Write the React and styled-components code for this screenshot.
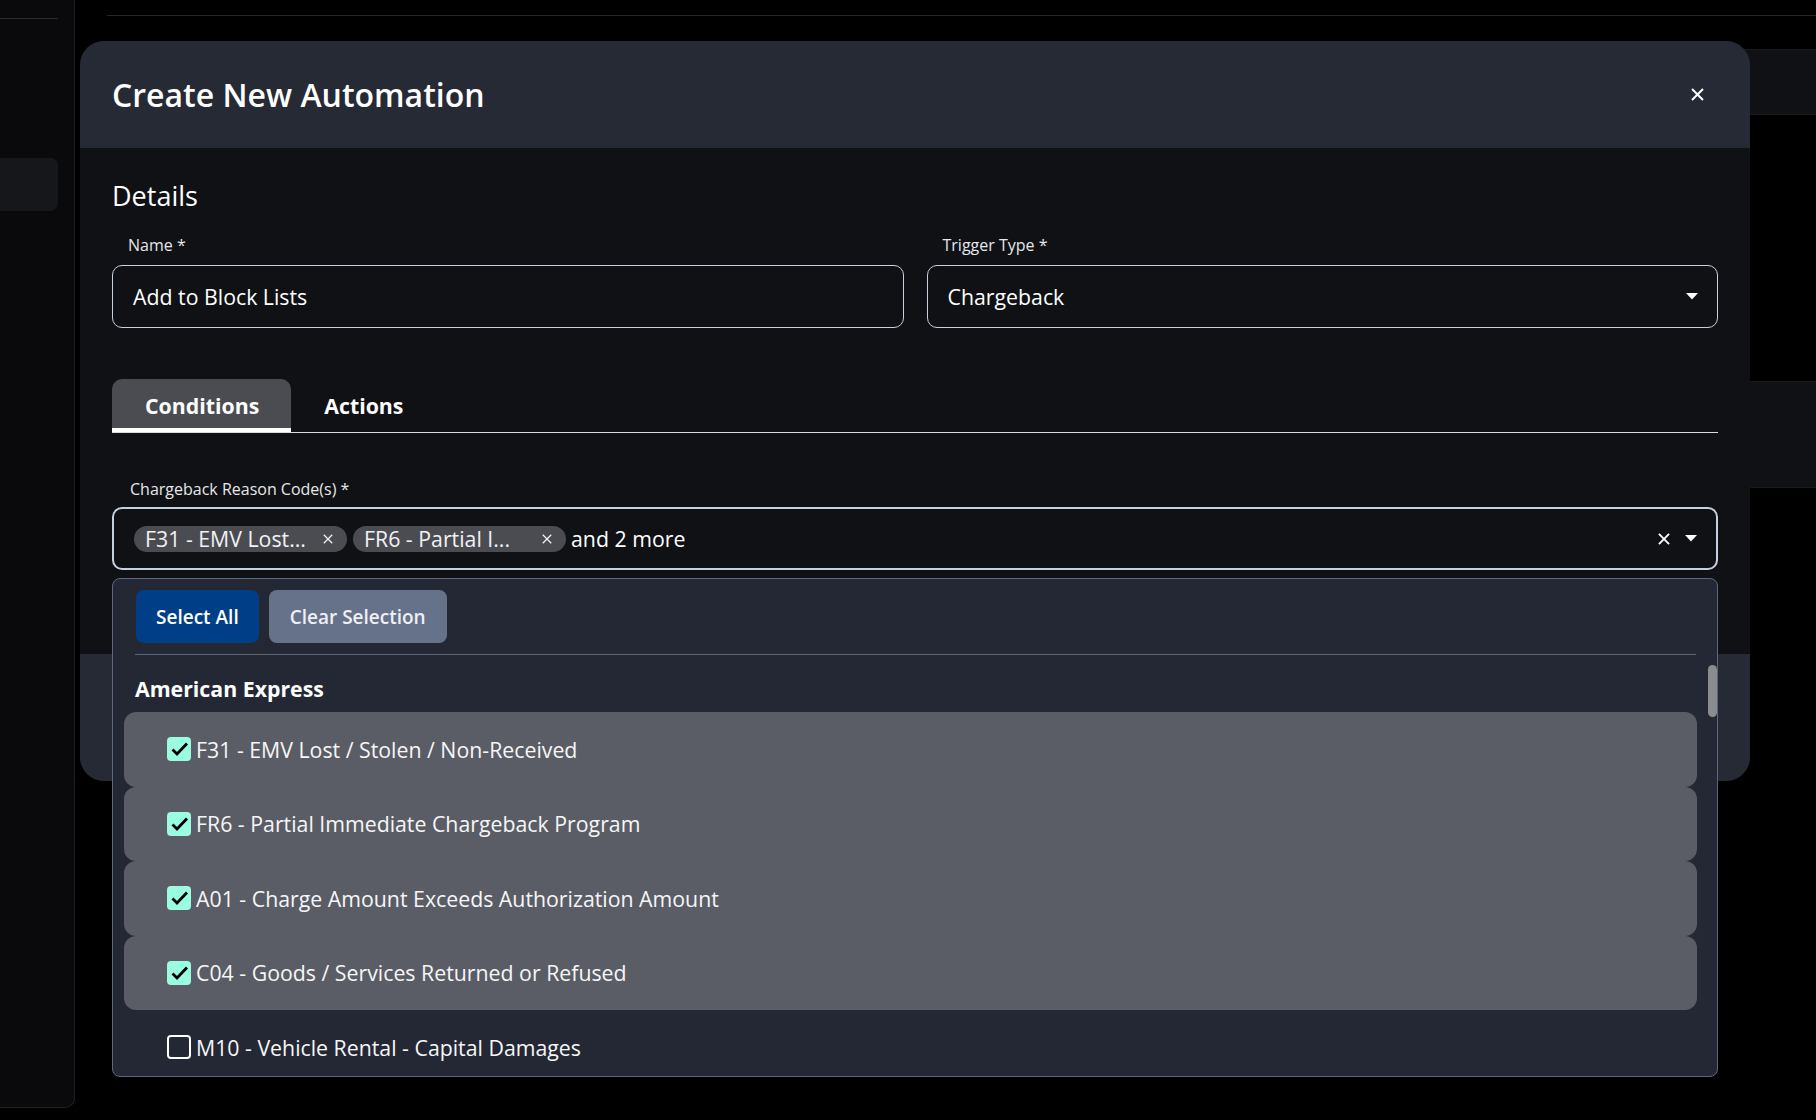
import React from "react"
import styled, { createGlobalStyle } from "styled-components"

const colors = {
  page: "#000000",
  panel: "#0f1115",
  header: "#252a35",
  dropdown: "#242834",
  row: "#5a5d66",
  chip: "#4a4c52",
  border: "#c6d0e1",
  text: "#f4f5f7",
  check: "#9afce0",
}

const GlobalStyle = createGlobalStyle`
  body {
    margin: 0;
    background: ${colors.page};
    font-family: "Open Sans", "Noto Sans", sans-serif;
    color: ${colors.text};
  }
`

const Page = styled.div`
  position: relative;
  display: flex;
  width: 1816px;
  height: 1120px;
  overflow: hidden;
`

const Sidebar = styled.aside`
  width: 74px;
  height: 1107px;
  flex-shrink: 0;
  background: #0a0a0c;
  border-right: 1px solid #1f2024;
  border-bottom: 1px solid #1f2024;
  border-bottom-right-radius: 10px;
  .rule {
    margin-top: 18px;
    width: 58px;
    height: 1px;
    background: #2a2b2f;
  }
  .item {
    margin-top: 139px;
    width: 58px;
    height: 53px;
    background: #16171b;
    border-radius: 0 8px 8px 0;
  }
`

const Main = styled.main`
  flex: 1;
  padding-left: 32px;
  .top-rule {
    margin-top: 15px;
    height: 1px;
    background: #26272b;
  }
`

const BackCard = styled.div`
  margin-top: ${props => props.offset}px;
  height: ${props => props.size}px;
  background: ${colors.panel};
  border-top: 1px solid #17191e;
  border-bottom: 1px solid #17191e;
`

const Overlay = styled.div`
  position: absolute;
  inset: 0;
  padding: 41px 0 0 80px;
`

const Modal = styled.section`
  width: 1670px;
  background: ${colors.panel};
  border-radius: 24px;
`

const ModalHeader = styled.header`
  height: 107px;
  display: flex;
  align-items: center;
  justify-content: space-between;
  padding: 0 46px 0 32px;
  background: ${colors.header};
  border-radius: 24px 24px 0 0;
  h2 {
    margin: 0;
    font-size: 32px;
    font-weight: 600;
    color: #ffffff;
  }
`

const IconButton = styled.button`
  display: flex;
  padding: 0;
  border: 0;
  background: none;
  color: #ffffff;
`

const ModalBody = styled.div`
  padding: 30px 32px 84px;
`

const SectionTitle = styled.h3`
  margin: 0;
  font-size: 27px;
  line-height: 36px;
  font-weight: 500;
  color: #ffffff;
`

const FieldGrid = styled.div`
  display: grid;
  grid-template-columns: 1fr 1fr;
  gap: 23px;
  margin-top: 21px;
`

const Field = styled.div`
  position: relative;
  display: flex;
  flex-direction: column;
`

const Label = styled.label`
  padding-left: ${props => props.indent || 16}px;
  margin-bottom: ${props => props.gap || 10}px;
  font-size: 16px;
  line-height: 20px;
  color: #e6e7ea;
`

const InputBox = styled.div`
  height: 63px;
  box-sizing: border-box;
  display: flex;
  align-items: center;
  gap: 6px;
  padding: 0 19px 0 20px;
  border: ${props => (props.focused ? 2 : 1)}px solid ${colors.border};
  border-radius: 10px;
  font-size: 21.3px;
  color: #ffffff;
  .value {
    flex: 1;
  }
  .more {
    flex: 1;
    margin-left: -1px;
  }
`

const Adornments = styled.div`
  display: flex;
  align-items: center;
  gap: 15px;
`

const Chip = styled.span`
  display: flex;
  align-items: center;
  gap: 13px;
  height: 26px;
  padding: 0 14px 0 11px;
  border-radius: 13px;
  background: ${colors.chip};
  font-size: 21.3px;
  color: #f1f2f4;
  .chip-label {
    width: 165px;
    white-space: nowrap;
  }
`

const TabBar = styled.div`
  display: flex;
  margin-top: 51px;
  border-bottom: 1px solid #d8dbe0;
`

const Tab = styled.div`
  height: 53px;
  box-sizing: border-box;
  display: flex;
  align-items: center;
  padding: 4px 32px 0 33px;
  font-size: 21.3px;
  font-weight: 700;
  color: #ffffff;
  background: ${props => (props.active ? "#4b4c51" : "transparent")};
  border-radius: 10px 10px 0 0;
  border-bottom: 4px solid ${props => (props.active ? "#ffffff" : "transparent")};
`

const ConditionsField = styled(Field)`
  margin-top: 46px;
`

const Dropdown = styled.div`
  position: absolute;
  top: calc(100% + 8px);
  left: 0;
  right: 0;
  height: 499px;
  box-sizing: border-box;
  z-index: 2;
  overflow: hidden;
  background: ${colors.dropdown};
  border: 1px solid #5d6880;
  border-radius: 8px;
`

const ButtonBar = styled.div`
  display: flex;
  gap: 10px;
  padding: 11px 0 0 23px;
`

const Button = styled.button`
  height: 53px;
  padding: 0 ${props => props.pad}px;
  border: 0;
  border-radius: 8px;
  font-family: inherit;
  font-size: 19px;
  font-weight: 600;
  color: ${props => (props.primary ? "#ffffff" : "#eef0f5")};
  background: ${props => (props.primary ? "#003e87" : "#66718a")};
`

const Divider = styled.div`
  height: 1px;
  margin: 11px 21px 0 22px;
  background: #5b6478;
`

const GroupTitle = styled.div`
  margin: 19px 0 8px 22px;
  font-size: 21.3px;
  line-height: 30px;
  font-weight: 700;
  color: #ffffff;
`

const Option = styled.div`
  height: 74.5px;
  display: flex;
  align-items: center;
  gap: 5px;
  margin: 0 20px 0 11px;
  padding-left: 43px;
  border-radius: 12px;
  background: ${props => (props.selected ? colors.row : "transparent")};
  font-size: 21.3px;
  color: #f6f6f7;
`

const Checkbox = styled.span`
  width: 24px;
  height: 24px;
  box-sizing: border-box;
  display: flex;
  align-items: center;
  justify-content: center;
  border-radius: 4px;
  background: ${props => (props.checked ? colors.check : "transparent")};
  border: ${props => (props.checked ? "none" : "2px solid #ffffff")};
`

const ScrollThumb = styled.div`
  position: absolute;
  top: 86px;
  right: 0;
  width: 9px;
  height: 52px;
  border-radius: 5px;
  background: #8b8c90;
`

const ModalFooter = styled.footer`
  height: 127px;
  background: ${colors.header};
  border-radius: 0 0 24px 24px;
`

const CloseIcon = ({ size = 13, width = 2 }) => (
  <svg width={size} height={size} viewBox="0 0 13 13">
    <path d="M1 1 L12 12 M12 1 L1 12" stroke="currentColor" strokeWidth={width} />
  </svg>
)

const ArrowIcon = () => (
  <svg width="12" height="7" viewBox="0 0 12 7">
    <path d="M0 0 H12 L6 6.5 Z" fill="#ffffff" />
  </svg>
)

const CheckIcon = () => (
  <svg width="19" height="16" viewBox="0 0 19 16">
    <path d="M2.5 8.5 L7 13 L17 2.5" stroke="#000" strokeWidth="2.8" fill="none" />
  </svg>
)

// short = the label as the chip shows it, cut to the chip width
const options = [
  { label: "F31 - EMV Lost / Stolen / Non-Received", short: "F31 - EMV Lost...", selected: true },
  { label: "FR6 - Partial Immediate Chargeback Program", short: "FR6 - Partial I...", selected: true },
  { label: "A01 - Charge Amount Exceeds Authorization Amount", selected: true },
  { label: "C04 - Goods / Services Returned or Refused", selected: true },
  { label: "M10 - Vehicle Rental - Capital Damages", selected: false },
]

const App = () => {
  const chips = options.filter(o => o.selected)

  return (
    <Page>
      <GlobalStyle />
      <Sidebar>
        <div className="rule" />
        <div className="item" />
      </Sidebar>
      <Main>
        <div className="top-rule" />
        <BackCard offset={33} size={64} />
        <BackCard offset={266} size={105} />
      </Main>

      <Overlay>
        <Modal>
          <ModalHeader>
            <h2>Create New Automation</h2>
            <IconButton aria-label="Close">
              <CloseIcon />
            </IconButton>
          </ModalHeader>

          <ModalBody>
            <SectionTitle>Details</SectionTitle>
            <FieldGrid>
              <Field>
                <Label>Name *</Label>
                <InputBox>
                  <span className="value">Add to Block Lists</span>
                </InputBox>
              </Field>
              <Field>
                <Label>Trigger Type *</Label>
                <InputBox>
                  <span className="value">Chargeback</span>
                  <ArrowIcon />
                </InputBox>
              </Field>
            </FieldGrid>

            <TabBar>
              <Tab active>Conditions</Tab>
              <Tab>Actions</Tab>
            </TabBar>

            <ConditionsField>
              <Label indent={18} gap={8}>Chargeback Reason Code(s) *</Label>
              <InputBox focused>
                {chips.slice(0, 2).map(chip => (
                  <Chip key={chip.label} title={chip.label}>
                    <span className="chip-label">{chip.short}</span>
                    <CloseIcon size={10} width={1.6} />
                  </Chip>
                ))}
                <span className="more">and {chips.length - 2} more</span>
                <Adornments>
                  <CloseIcon size={12} width={2} />
                  <ArrowIcon />
                </Adornments>
              </InputBox>

              <Dropdown>
                <ButtonBar>
                  <Button primary pad={20}>Select All</Button>
                  <Button pad={21}>Clear Selection</Button>
                </ButtonBar>
                <Divider />
                <GroupTitle>American Express</GroupTitle>
                {options.map(option => (
                  <Option key={option.label} selected={option.selected}>
                    <Checkbox checked={option.selected}>
                      {option.selected && <CheckIcon />}
                    </Checkbox>
                    {option.label}
                  </Option>
                ))}
                <ScrollThumb />
              </Dropdown>
            </ConditionsField>
          </ModalBody>

          <ModalFooter />
        </Modal>
      </Overlay>
    </Page>
  )
}

export default App
